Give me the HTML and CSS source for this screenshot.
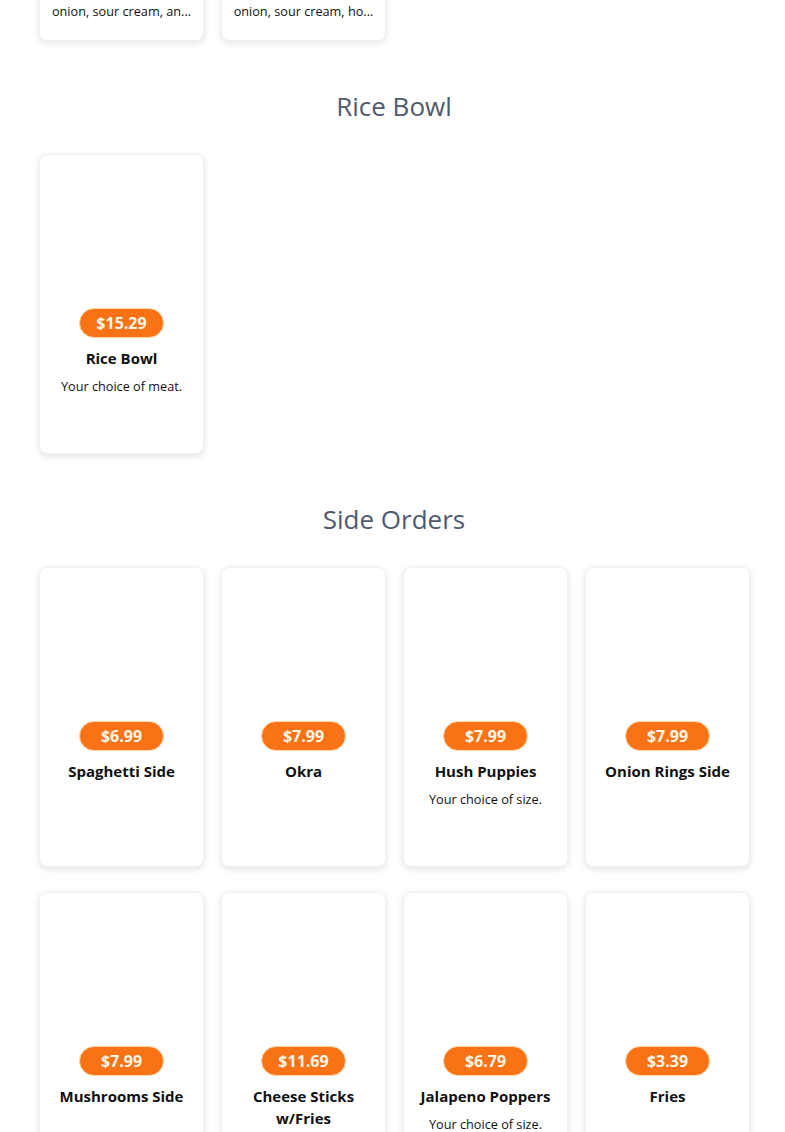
FILE: index.html
```html
<!DOCTYPE html>
<html lang="en">
<head>
  <meta charset="UTF-8">
  <title>Menu</title>
  <link rel="stylesheet" href="styles.css">
</head>
<body>
  <div class="menu">
    <section class="category category-top">
      <div class="item-grid">
        <div class="item-card">
          <div class="item-photo"></div>
          <span class="price">$9.49</span>
          <div class="item-name">Loaded Fries</div>
          <p class="item-desc">Topped with melted cheese, bacon, green onion, sour cream, an...</p>
        </div>
        <div class="item-card">
          <div class="item-photo"></div>
          <span class="price">$10.99</span>
          <div class="item-name">Loaded Tots</div>
          <p class="item-desc">Topped with chili, cheese, bacon, green onion, sour cream, ho...</p>
        </div>
      </div>
    </section>

    <section class="category">
      <h2 class="category-title">Rice Bowl</h2>
      <div class="item-grid">
        <div class="item-card">
          <div class="item-photo"></div>
          <span class="price">$15.29</span>
          <div class="item-name">Rice Bowl</div>
          <p class="item-desc">Your choice of meat.</p>
        </div>
      </div>
    </section>

    <section class="category">
      <h2 class="category-title">Side Orders</h2>
      <div class="item-grid">
        <div class="item-card">
          <div class="item-photo"></div>
          <span class="price">$6.99</span>
          <div class="item-name">Spaghetti Side</div>
        </div>
        <div class="item-card">
          <div class="item-photo"></div>
          <span class="price">$7.99</span>
          <div class="item-name">Okra</div>
        </div>
        <div class="item-card">
          <div class="item-photo"></div>
          <span class="price">$7.99</span>
          <div class="item-name">Hush Puppies</div>
          <p class="item-desc">Your choice of size.</p>
        </div>
        <div class="item-card">
          <div class="item-photo"></div>
          <span class="price">$7.99</span>
          <div class="item-name">Onion Rings Side</div>
        </div>
        <div class="item-card">
          <div class="item-photo"></div>
          <span class="price">$7.99</span>
          <div class="item-name">Mushrooms Side</div>
        </div>
        <div class="item-card">
          <div class="item-photo"></div>
          <span class="price">$11.69</span>
          <div class="item-name">Cheese Sticks w/Fries</div>
        </div>
        <div class="item-card">
          <div class="item-photo"></div>
          <span class="price">$6.79</span>
          <div class="item-name">Jalapeno Poppers</div>
          <p class="item-desc">Your choice of size.</p>
        </div>
        <div class="item-card">
          <div class="item-photo"></div>
          <span class="price">$3.39</span>
          <div class="item-name">Fries</div>
        </div>
      </div>
    </section>
  </div>
</body>
</html>
```

FILE: styles.css
```css
body {
  margin: 0;
  font-family: "Open Sans", Arial, sans-serif;
  background: #fff;
  color: #111;
}
.menu {
  width: 710px;
  margin-left: 39px;
}
.category {
  padding-top: 46px;
}
.category-top {
  padding-top: 0;
  margin-top: -259px;
}
.category-title {
  margin: 0 0 29px;
  font-size: 26px;
  line-height: 38px;
  font-weight: 400;
  color: #4f5a6e;
  text-align: center;
}
.item-grid {
  display: grid;
  grid-template-columns: repeat(4, 165px);
  column-gap: 17px;
  row-gap: 25px;
}
.item-card {
  height: 300px;
  box-sizing: border-box;
  padding: 0 11px;
  background: #fff;
  border: 1px solid #f1f1f1;
  border-radius: 8px;
  box-shadow: 0 2px 7px rgba(0,0,0,0.12);
  display: flex;
  flex-direction: column;
  align-items: center;
  text-align: center;
}
.item-photo {
  height: 153px;
  flex-shrink: 0;
}
.price {
  display: inline-block;
  box-sizing: border-box;
  width: 85px;
  height: 30px;
  line-height: 28px;
  border: 1px solid #fcd9a8;
  border-radius: 15px;
  background: #f97316;
  color: #fff8ea;
  font-size: 16px;
  font-weight: 700;
}
.item-name {
  margin-top: 9px;
  font-size: 15px;
  line-height: 22px;
  font-weight: 700;
}
.item-desc {
  margin: 8px 0 0;
  font-size: 12.7px;
  line-height: 19px;
}
```
